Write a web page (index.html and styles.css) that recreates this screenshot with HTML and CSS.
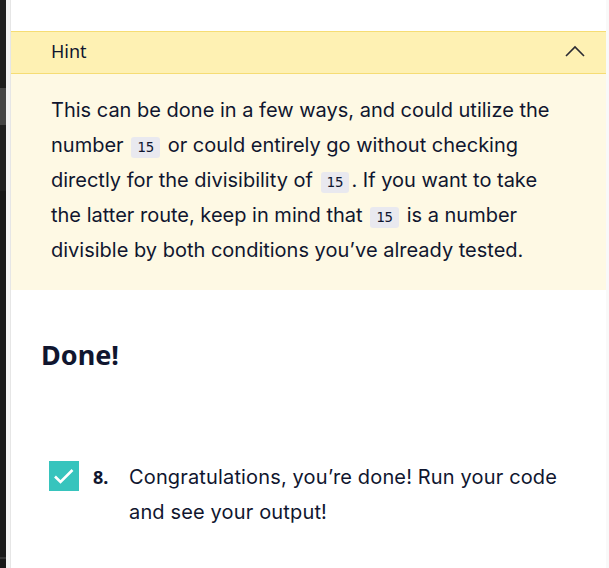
FILE: index.html
```html
<!DOCTYPE html>
<html lang="en">
<head>
<meta charset="utf-8">
<title>Hint</title>
<link rel="stylesheet" href="styles.css">
</head>
<body>
<div class="app">
  <div class="rail">
    <div class="rail-seg rail-a"></div>
    <div class="rail-seg rail-b"></div>
    <div class="rail-seg rail-c"></div>
    <div class="rail-seg rail-d"></div>
    <div class="rail-seg rail-e"></div>
    <div class="rail-seg rail-f"></div>
  </div>
  <div class="gutter"></div>
  <main class="content">
    <section class="hint">
      <div class="hint-head">
        <span class="hint-title">Hint</span>
        <svg class="chevron" width="20" height="12" viewBox="0 0 20 12" aria-hidden="true"><polyline points="1,11 10,2 19,11" fill="none" stroke="#2b2b33" stroke-width="1.6"/></svg>
      </div>
      <div class="hint-body">
        <p>This can be done in a few ways, and could utilize the number <code>15</code> or could entirely go without checking directly for the divisibility of <code>15</code>. If you want to take the latter route, keep in mind that <code>15</code> is a number divisible by both conditions you’ve already tested.</p>
      </div>
    </section>
    <h2 class="done">Done!</h2>
    <div class="task">
      <span class="check"><svg width="30" height="30" viewBox="0 0 30 30" aria-hidden="true"><polyline points="6,15.5 11.5,21 23.5,9" fill="none" stroke="#fff" stroke-width="2.6"/></svg></span>
      <span class="num">8.</span>
      <p class="task-text">Congratulations, you’re done! Run your code and see your output!</p>
    </div>
  </main>
  <div class="edge"></div>
</div>
</body>
</html>
```

FILE: styles.css
```css
html, body {
  margin: 0;
  padding: 0;
  background: #ffffff;
}
.app {
  display: flex;
  width: 609px;
  height: 568px;
  overflow: hidden;
}
.rail {
  width: 6px;
  display: flex;
  flex-direction: column;
  flex-shrink: 0;
}
.rail-a { height: 88px; background: #1e1e1e; }
.rail-b { height: 37px; background: #454545; }
.rail-c { height: 66px; background: #1f1f1f; }
.rail-d { height: 366px; background: #181818; }
.rail-e { height: 2px; background: #333333; }
.rail-f { flex: 1; background: #181818; }
.gutter {
  width: 4px;
  flex-shrink: 0;
  background: #f3f3f3;
  border-right: 1px solid #e6e6e6;
}
.content {
  width: 595px;
  flex-shrink: 0;
  padding-top: 31px;
  color: #10162f;
}
.edge {
  flex: 1;
  background: #f9f9f9;
}
.hint-head {
  height: 41px;
  display: flex;
  align-items: center;
  justify-content: space-between;
  padding: 0 21px 0 40px;
  background: #fef1b3;
  border-top: 1px solid #f6dd74;
  border-bottom: 1px solid #f6dd74;
}
.hint-title {
  font-family: "Noto Sans", sans-serif;
  font-size: 18px;
  line-height: 24px;
  margin-top: -3px;
}
.chevron {
  display: block;
  margin-top: -3px;
}
.hint-body {
  background: #fef9e4;
  padding: 19px 48px 22px 40px;
  height: 216px;
  box-sizing: border-box;
}
.hint-body p {
  margin: 0;
  font-family: "Inter", sans-serif;
  font-size: 20px;
  line-height: 35px;
}
code {
  display: inline-block;
  font-family: "DejaVu Sans Mono", monospace;
  font-size: 14px;
  line-height: 17px;
  background: #e9e9ef;
  padding: 2px 6px;
  border-radius: 3px;
  margin: 0 2px;
}
.done {
  margin: 47px 0 0 30px;
  font-family: "Noto Sans", sans-serif;
  font-weight: 700;
  font-size: 27px;
  line-height: 36px;
}
.task {
  display: flex;
  align-items: flex-start;
  margin: 87px 0 0 38px;
}
.check {
  width: 30px;
  height: 30px;
  background: #37c4bd;
  flex-shrink: 0;
  margin-top: 1px;
}
.check svg { display: block; }
.num {
  width: 36px;
  flex-shrink: 0;
  margin-left: 14px;
  font-family: "Noto Sans", sans-serif;
  font-weight: 700;
  font-size: 18px;
  line-height: 35px;
}
.task-text {
  margin: 0;
  width: 450px;
  font-family: "Inter", sans-serif;
  font-size: 20px;
  letter-spacing: 0.15px;
  line-height: 35px;
}
```
